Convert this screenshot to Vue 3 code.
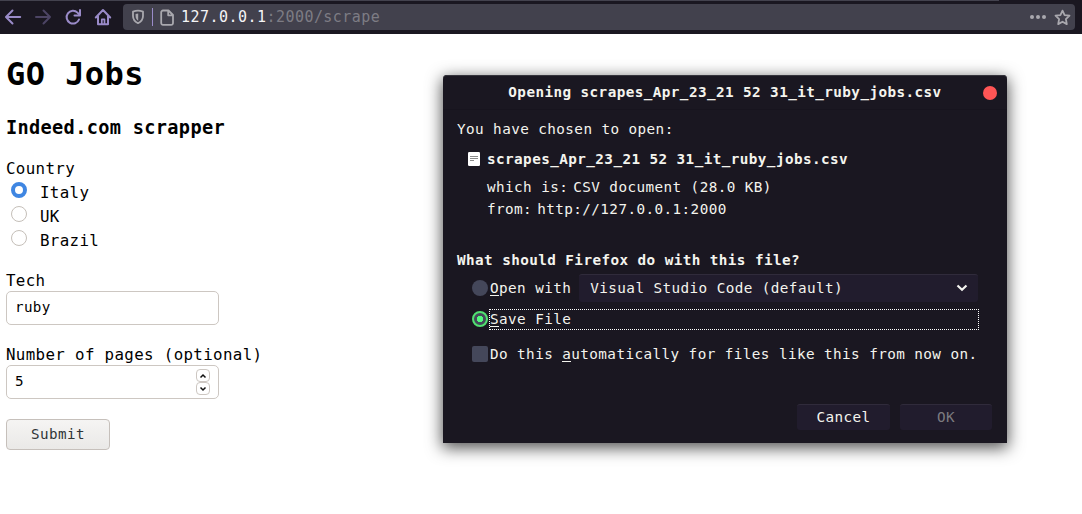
<script setup>
import { ref } from 'vue'

const countries = ['Italy', 'UK', 'Brazil']
const country = ref('Italy')
const fileName = 'scrapes_Apr_23_21 52 31_it_ruby_jobs.csv'
</script>

<template>
  <div class="window">
    <header class="toolbar">
      <nav class="nav">
        <svg width="18" height="18" viewBox="0 0 18 18" class="ic"><path d="M16.200 9H2.200M8.500 2.500 2 9l6.500 6.500" /></svg>
        <svg width="18" height="18" viewBox="0 0 18 18" class="ic dim"><path d="M2 9h14M9.500 2.500 16 9l-6.500 6.500" /></svg>
        <svg width="18" height="18" viewBox="0 0 18 18" class="ic"><path d="M15 11.500A6.400 6.400 0 1 1 13.500 4.600L15.500 6.800" /><path d="M16 2v5.500h-5.500" /></svg>
        <svg width="18" height="18" viewBox="0 0 18 18" class="ic"><path d="M1.800 9.500 9 2l7.200 7.500M4 8v8.300h10V8" /><path d="M7.800 16v-4.700h2.700V16" stroke-width="1.700" /></svg>
      </nav>
      <div class="url">
        <svg width="14" height="16" viewBox="0 0 14 16" class="gray"><path d="M7 1.700c1.800 0 3.400.4 5 1v4.300c0 3.200-1.800 5.600-5 7.200-3.200-1.600-5-4-5-7.200V2.700c1.600-.6 3.200-1 5-1z" /><path d="M7.200 4.500v7.300c-1.700-1-2.600-2.600-2.600-4.800V4.900z" class="fill" /></svg>
        <i class="bar"></i>
        <svg width="14" height="17" viewBox="0 0 14 17" class="gray"><path d="M3 1.500h5.500L13 6v8a1.800 1.800 0 0 1-1.800 1.800H3A1.800 1.800 0 0 1 1.200 14V3.300A1.800 1.800 0 0 1 3 1.500zM8.200 1.700v4.600h4.600" /></svg>
        <span class="addr"><b>127.0.0.1</b>:2000/scrape</span>
        <span class="dots"><i></i><i></i><i></i></span>
        <svg width="17" height="17" viewBox="0 0 17 17" class="gray star"><path d="m8.500 1.600 2.100 4.500 4.900.6-3.600 3.400.9 5-4.300-2.400-4.300 2.400.9-5L1.500 6.700l4.900-.6z" /></svg>
      </div>
    </header>

    <main class="page">
      <h1>GO Jobs</h1>
      <h3>Indeed.com scrapper</h3>
      <div class="line">Country</div>
      <div v-for="c in countries" :key="c" class="line option">
        <span class="radio" :class="{ on: c === country }"></span>{{ c }}
      </div>
      <div class="label tech">Tech</div>
      <div class="field">ruby</div>
      <div class="label pages">Number of pages (optional)</div>
      <div class="field">
        5
        <span class="spin">
          <span><svg width="8" height="6" viewBox="0 0 8 6"><path d="M1.500 4.500 4 2l2.500 2.500" /></svg></span>
          <span><svg width="8" height="6" viewBox="0 0 8 6"><path d="M1.500 1.500 4 4l2.500-2.500" /></svg></span>
        </span>
      </div>
      <div class="submit">Submit</div>
    </main>

    <section class="dialog">
      <div class="title"><b>Opening {{ fileName }}</b><i class="close"></i></div>
      <div class="body">
        <div class="row r1">You have chosen to open:</div>
        <div class="row r2">
          <svg width="12" height="14" viewBox="0 0 12 14"><rect width="12" height="14" rx="1.200" fill="#fff" /><path d="M2 4.500h8M2 6.500h8M2 8.500h4" stroke="#8b8b8b" /></svg>
          <b>{{ fileName }}</b>
        </div>
        <div class="row r3"><span>which is:</span><span>CSV document (28.0 KB)</span></div>
        <div class="row r4"><span>from:</span><span>http://127.0.0.1:2000</span></div>
        <div class="row r5"><b>What should Firefox do with this file?</b></div>
        <div class="row r6">
          <i class="knob"></i><span><u>O</u>pen with</span>
          <div class="select">Visual Studio Code (default)
            <svg width="12" height="8" viewBox="0 0 12 8"><path d="m1.500 1.500 4.500 4.200 4.500-4.200" /></svg>
          </div>
        </div>
        <div class="row r7"><i class="knob sel"></i><span class="focus"><u>S</u>ave File</span></div>
        <div class="row r8"><i class="check"></i><span>Do this <u>a</u>utomatically for files like this from now on.</span></div>
        <div class="buttons"><div class="btn">Cancel</div><div class="btn off">OK</div></div>
      </div>
    </section>
  </div>
</template>

<style>
body { margin: 0; background: #fff; overflow: hidden; }
</style>

<style scoped>
.window {
  position: relative; width: 1082px; height: 514px; overflow: hidden; background: #fff; color: #000;
  font-family: "DejaVu Sans Mono", "Liberation Mono", monospace;
  font-size: 15.8px; letter-spacing: 0.35px; white-space: nowrap;
}
.window * { box-sizing: border-box; }
svg { display: block; fill: none; flex: none; }
i { display: block; flex: none; }

.toolbar {
  height: 34px; display: flex; align-items: flex-start; padding: 4px 7px 0 4px;
  background: linear-gradient(90deg, #43424e 999px, #1a1721 999px) 0 0 / 100% 1px no-repeat, #1a1721;
}
.nav { display: flex; gap: 12px; width: 119px; padding-top: 4px; }
.ic { stroke: #9a8bc9; stroke-width: 2; stroke-linejoin: round; stroke-linecap: round; }
.dim { stroke: #4c4464; }
.url { flex: 1; height: 26px; border-radius: 4px; background: #42414d; display: flex; align-items: center; padding: 0 4px 0 8px; }
.gray { stroke: #a9a8ae; stroke-width: 1.8; stroke-linejoin: round; }
.fill { fill: #a9a8ae; stroke: none; }
.bar { width: 1px; height: 18px; margin: 0 7px; background: #9a8bc9; }
.addr { margin-left: 7px; font-size: 15px; letter-spacing: 0.46px; color: #7d7c84; }
.addr b { font-weight: 400; color: #f4f4f5; }
.dots { display: flex; gap: 2px; margin-left: auto; }
.dots i { width: 4px; height: 4px; border-radius: 50%; background: #a9a8ae; }
.star { margin-left: 8px; }

.page { padding-left: 6px; }
h1 { margin: 20px 0 0; font-size: 32px; line-height: 40px; letter-spacing: 0.45px; }
h3 { margin: 22px 0 0; font-size: 18.6px; line-height: 24px; letter-spacing: 0.33px; }
.line { height: 24px; line-height: 24px; }
h3 + .line { margin-top: 17px; }
.option { display: flex; gap: 13px; padding-left: 5px; }
.radio { width: 16px; height: 16px; margin-top: 1px; border: 1px solid #c5bfb9; border-radius: 50%; background: #fff; }
.radio.on { border: 4.500px solid #3f86e2; }
.label { height: 21px; line-height: 22px; }
.tech { margin-top: 17px; }
.pages { margin-top: 19px; }
.field {
  width: 213px; height: 34px; padding: 0 8px; border: 1px solid #cdc7c2; border-radius: 5px;
  display: flex; justify-content: space-between; align-items: center;
  font-size: 14.2px; letter-spacing: 0.35px; line-height: 30px; padding-bottom: 2px;
}
.spin { display: flex; flex-direction: column; margin-top: 2px; }
.spin span { width: 14px; height: 13px; border: 1px solid #cdc7c2; border-radius: 4px; display: grid; place-items: center; }
.spin svg { stroke: #111; stroke-width: 1.500; }
.submit {
  width: 104px; height: 31px; margin-top: 20px; border: 1px solid #c6c0bb; border-radius: 4px;
  background: linear-gradient(#f5f4f3, #eae9e7); color: #2e3436; text-align: center;
  font-size: 14.2px; letter-spacing: 0.47px; line-height: 29px;
}

.dialog {
  position: absolute; left: 443px; top: 75px; width: 564px; height: 368px;
  border-radius: 4px 4px 0 0; background: #1a1721; color: #f4f4ee;
  box-shadow: 0 4px 16px 1px rgba(0, 0, 0, 0.68), inset 0 1px 0 #35343c;
  font-size: 14.3px; letter-spacing: 0.42px;
}
.title { position: relative; height: 35px; line-height: 34px; text-align: center; border-bottom: 1px solid #17141e; }
.close { position: absolute; right: 10px; top: 11px; width: 14px; height: 14px; border-radius: 50%; background: #ff5555; }
.body { padding: 10px 15px 0 14px; }
.row { display: flex; align-items: center; height: 18px; line-height: 18px; }
.r2 { margin-top: 12px; padding-left: 11px; gap: 7px; }
.r3 { margin-top: 10px; }
.r4 { margin-top: 4px; }
.r3, .r4 { padding-left: 30px; gap: 5px; }
.r5 { margin-top: 33px; }
.r6 { height: 28px; margin-top: 5px; }
.r7 { height: 21px; margin-top: 7px; }
.r8 { margin-top: 15px; }
.r6, .r7, .r8 { padding-left: 15px; gap: 2px; }
u { text-decoration: none; box-shadow: 0 -1px 0 #f4f4ee inset; display: inline-block; height: 17px; letter-spacing: 0; margin-right: 0.42px; }
.knob { width: 16px; height: 16px; border-radius: 50%; background: #44475a; }
.sel { margin-bottom: 1px; border: 2px solid #50e070; background: radial-gradient(circle, #50fa7b 3px, #44475a 3.500px); }
.check { width: 16px; height: 16px; border-radius: 2px; background: #44475a; }
.select {
  width: 399px; height: 28px; margin-left: 6px; padding: 0 10px 1px 11px; display: flex; align-items: center; justify-content: space-between;
  border-radius: 3px; background: #211c2d; border-top: 1px solid #302b3b; line-height: 26px;
}
.select svg { stroke: #f4f4f0; stroke-width: 2.200; }
.focus { width: 490px; height: 21px; margin-left: -1px; border: 1px dotted #fff; line-height: 18px; }
.buttons { display: flex; justify-content: flex-end; gap: 10px; margin-top: 41px; }
.btn { width: 93px; height: 26px; border-radius: 3px; background: #211c2d; border-top: 1px solid #302b3b; text-align: center; line-height: 25px; }
.off { color: #7c7b80; width: 92px; }
</style>
